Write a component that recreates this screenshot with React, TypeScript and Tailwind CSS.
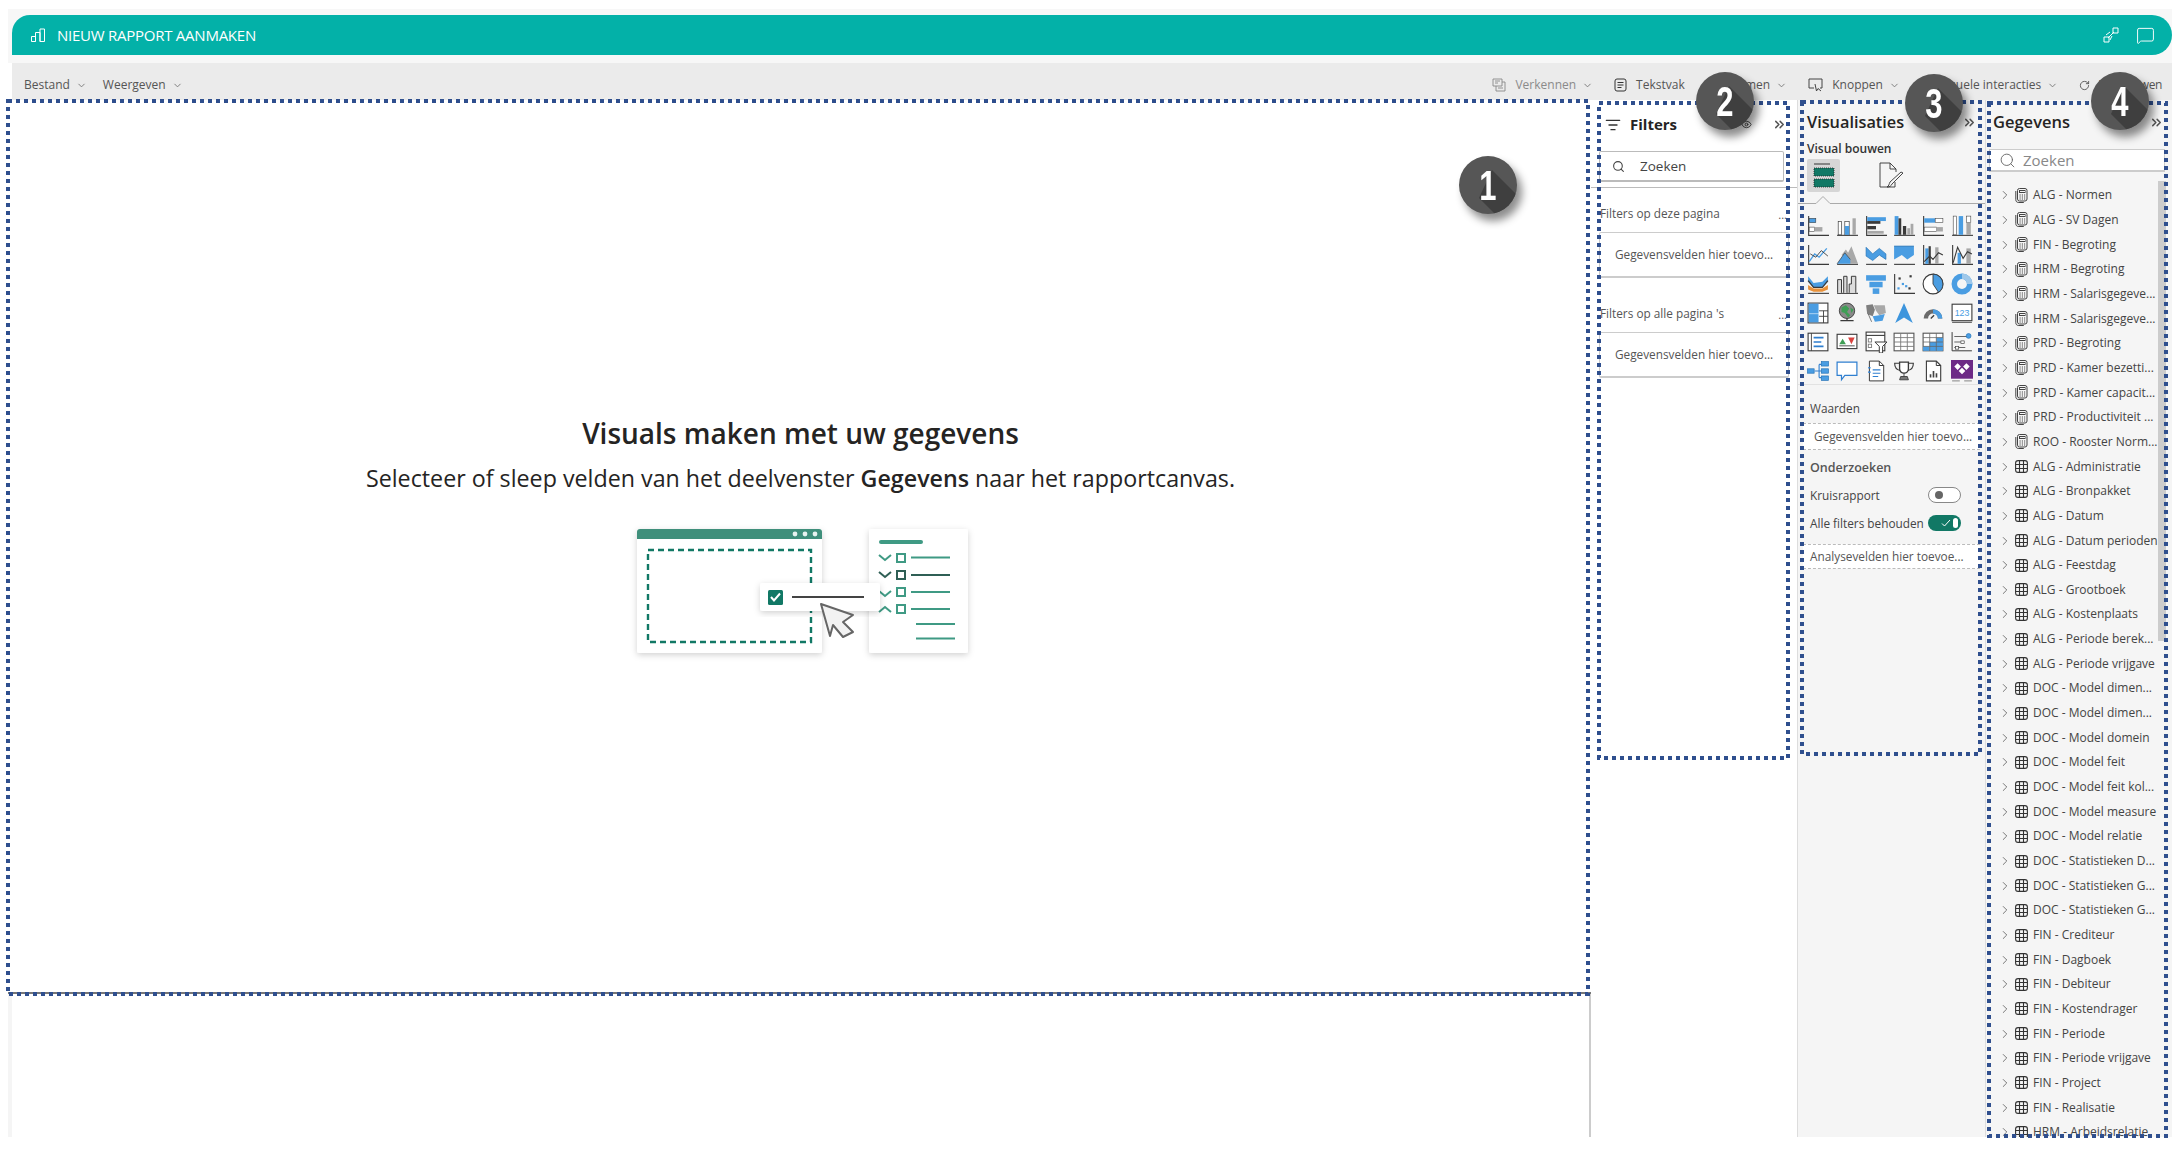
import { ReactNode } from "react";
import { ChevronDown, ChevronRight, ChevronsRight, Eye, ListFilter, MessageSquare, RotateCw, Search } from "lucide-react";

const B = "#4a9de2";
const G = "#a8a8a8";
const D = "#3a3a3a";
const axis = <path d="M1.5 1v17.5H20" fill="none" stroke={D} strokeWidth="1" />;
const base = <path d="M1 18.5h19" fill="none" stroke={D} strokeWidth="1" />;

// Visualisaties gallery, row by row
const vizIcons: ReactNode[] = [
  <>{axis}<rect x="2" y="3" width="6" height="4" fill={B} stroke={D} strokeWidth=".5" /><rect x="2" y="11" width="5" height="4" fill="#fff" stroke={D} strokeWidth=".5" /><rect x="7" y="11" width="7" height="4" fill={G} /></>,
  <>{base}<rect x="2" y="6" width="3" height="12" fill="#fff" stroke={D} strokeWidth=".6" /><rect x="8" y="6" width="4" height="12" fill="#fff" stroke={D} strokeWidth=".6" /><rect x="8" y="10" width="4" height="8" fill={B} /><rect x="15" y="3" width="3" height="15" fill={G} /></>,
  <>{axis}<rect x="2" y="2" width="17" height="3.5" fill={B} /><rect x="2" y="5.5" width="12" height="2.5" fill={D} /><rect x="2" y="10" width="8" height="3" fill={D} /><rect x="2" y="14.5" width="15" height="2.5" fill={G} /></>,
  <>{base}<rect x="1.5" y="1" width="3.5" height="17" fill={B} /><rect x="5" y="3" width="2.5" height="15" fill={D} /><rect x="9" y="10" width="3" height="8" fill={D} /><rect x="13" y="12" width="2.5" height="6" fill={G} /><rect x="16" y="8" width="2.5" height="10" fill={G} /></>,
  <>{axis}<rect x="2" y="3" width="10" height="4" fill={B} /><rect x="12" y="3" width="7" height="4" fill="#fff" stroke={D} strokeWidth=".5" /><rect x="2" y="11" width="11" height="4" fill="#fff" stroke={D} strokeWidth=".5" /><rect x="13" y="11" width="6" height="4" fill={G} /></>,
  <>{base}<rect x="2" y="1" width="3" height="17" fill="#fff" stroke={D} strokeWidth=".5" /><rect x="7" y="1" width="4" height="17" fill={B} /><rect x="14" y="1" width="4" height="6" fill="#fff" stroke={D} strokeWidth=".5" /><rect x="14" y="7" width="4" height="11" fill={G} /></>,

  <>{axis}<path d="M2 16l5-7 4 3 7-8" fill="none" stroke={B} strokeWidth="1.2" /><path d="M3 9l5 3 5-6 6 5" fill="none" stroke={D} strokeWidth=".8" /></>,
  <>{base}<path d="M5 10l4-5 2 3 3-6 6 16h-7l-5-6z" fill={G} /><path d="M1 18l7-10 5 6v4z" fill={B} /><path d="M1 18l7-10 5 6" fill="none" stroke={D} strokeWidth=".6" /></>,
  <>{base}<path d="M1 3l6 6 6-5 6 5v5l-6-4-6 5-6-4z" fill={B} stroke="#1f6fb5" strokeWidth=".6" /></>,
  <>{base}<path d="M1 2h18v8l-6 4-5-4-7 4z" fill={B} /><path d="M1 2h18" stroke="#1f6fb5" strokeWidth=".8" /></>,
  <>{axis}<rect x="3" y="4" width="3" height="14" fill={B} /><rect x="6" y="2" width="2" height="16" fill={D} /><rect x="12" y="3" width="3" height="15" fill={G} /><path d="M2 16l5-5 3 3 5-6 4 2" fill="none" stroke={D} strokeWidth="1" /></>,
  <>{axis}<rect x="6" y="8" width="3" height="10" fill={B} /><rect x="14" y="4" width="4" height="14" fill={G} /><path d="M2 17l4-14 5 10 4-6 4 2" fill="none" stroke={D} strokeWidth="1" /></>,

  <>{base}<path d="M1 3l5 6 8-1 5-5v5l-5 5H6l-5-5z" fill={B} /><path d="M1 11l5 3h8l5-3v4l-5 2H6l-5-2z" fill="#e8913a" /><path d="M1 7l5 6h8l5-6" fill="none" stroke={D} strokeWidth="1.2" /></>,
  <>{base}<path d="M1.5 18V6h3.5v12M7 18V3h3v15M12 18v-8h2V3h4v15" fill="#dcdcdc" stroke={D} strokeWidth=".9" /></>,
  <><rect x="1" y="2" width="18" height="5" fill={B} /><rect x="4" y="8" width="12" height="5" fill={B} /><rect x="7" y="14" width="6" height="5" fill={B} /></>,
  <>{axis}<g fill={D}><rect x="5" y="4" width="2" height="2" /><rect x="15" y="2" width="2" height="2" /><rect x="14" y="13" width="2" height="2" /></g><g fill={B}><rect x="8" y="9" width="2" height="2" /><rect x="11" y="11" width="2" height="2" /><rect x="4" y="13" width="2" height="2" /></g></>,
  <><circle cx="10" cy="10" r="9" fill="#fff" stroke={D} strokeWidth="1" /><path d="M10 1a9 9 0 0 1 9 9 9 9 0 0 1-4 7.5L10 10z" fill={B} stroke={D} strokeWidth=".8" /></>,
  <><circle cx="10" cy="10" r="7" fill="none" stroke={B} strokeWidth="5" /><path d="M10 3a7 7 0 0 1 7 7" fill="none" stroke="#9fc8ea" strokeWidth="5" /></>,

  <><rect x="1" y="1" width="18" height="18" fill="#fff" stroke={D} strokeWidth="1" /><rect x="1.5" y="1.5" width="9" height="9" fill={B} /><rect x="1.5" y="11" width="9" height="7.5" fill={B} /><path d="M11 8h8M15 8v11M11 13h8" stroke={D} strokeWidth=".8" /></>,
  <><circle cx="10" cy="8" r="7" fill="#8a8a8a" stroke={D} strokeWidth=".8" /><path d="M5 5l4-2 3 3-2 3 3 3-2 2-3-4-3-1z" fill="#3f9e55" /><path d="M13 5l3 2-2 3z" fill="#3f9e55" /><path d="M4 17h12M10 15v2" stroke={D} strokeWidth="1.2" /></>,
  <><path d="M1 3l6-1 2 5-2 6-5-2z" fill="#7e7e7e" /><path d="M8 3l10 0 1 7-6 2-3-4z" fill={G} /><path d="M7 13l6-1 5-1-2 6-7 1z" fill={B} /><path d="M3 11l3 7" stroke={D} strokeWidth=".6" /></>,
  <path d="M10 1l8 18-8-5-8 5z" fill="#3d95dd" />,
  <><path d="M1.5 15a8.5 8.5 0 0 1 17 0h-4a4.5 4.5 0 0 0-9 0z" fill="#6b6b6b" /><path d="M10 6.5a8.5 8.5 0 0 1 8.5 8.5h-4a4.5 4.5 0 0 0-4.5-4.5z" fill={B} /><path d="M8 15l3-3" stroke={D} strokeWidth="1.2" /></>,
  <><rect x="1" y="2" width="18" height="15" fill="#fff" stroke={D} strokeWidth="1" /><text x="10" y="12.5" textAnchor="middle" fontSize="8" fill={B} fontFamily="Liberation Sans, sans-serif">123</text><path d="M1 18.5h18" stroke={D} strokeWidth=".8" /></>,

  <><rect x="1" y="2" width="18" height="16" fill="#fff" stroke={D} strokeWidth="1" /><path d="M4 2v16" stroke={D} strokeWidth=".8" /><path d="M6 6h9M6 10h7M6 14h9" stroke="#2f7fd0" strokeWidth="1.5" /></>,
  <><rect x="1" y="3" width="18" height="13" fill="#fff" stroke={D} strokeWidth="1" /><path d="M6 7l3 5H3z" fill="#3f9e55" /><path d="M11 6h6l-3 6z" fill="#d9433f" /><path d="M3 13.5h14" stroke={D} strokeWidth=".8" /></>,
  <><rect x="1" y="1" width="17" height="17" fill="#fff" stroke={D} strokeWidth="1" /><path d="M1 4h17" stroke={D} strokeWidth="1" /><g fill="none" stroke="#777" strokeWidth=".8"><rect x="3" y="7" width="3" height="3" /><rect x="3" y="12" width="3" height="3" /></g><path d="M9 10h11l-4 4v6h-3v-6z" fill="#fff" stroke={D} strokeWidth=".9" /></>,
  <><rect x="1" y="2" width="18" height="16" fill="#fff" stroke="#555" strokeWidth="1" /><path d="M1 6h18M1 10h18M1 14h18M7 2v16M13 2v16" stroke="#777" strokeWidth=".8" /></>,
  <><rect x="1" y="2" width="18" height="16" fill="#fff" stroke="#555" strokeWidth="1" /><rect x="7" y="10" width="12" height="8" fill={B} /><rect x="13" y="6" width="6" height="4" fill={B} /><rect x="1" y="14" width="6" height="4" fill={B} /><path d="M1 6h18M1 10h18M1 14h18M7 2v16M13 2v16" stroke="#666" strokeWidth=".7" /></>,
  <><path d="M1 1v17h18" fill="none" stroke={D} strokeWidth=".9" /><path d="M3 5h12M3 10h6M3 15h10" stroke={D} strokeWidth=".7" /><circle cx="16" cy="4.5" r="2.2" fill={B} stroke="#1f6fb5" strokeWidth=".6" /><rect x="9" y="9" width="3" height="2.5" fill="#fff" stroke={D} strokeWidth=".6" /><rect x="4" y="14" width="3" height="2.5" fill="#fff" stroke={D} strokeWidth=".6" /></>,

  <><path d="M7 10h4M11 4v12M11 4h2M11 10h2M11 16h2" fill="none" stroke="#2f7fd0" strokeWidth="1" /><rect x="0.5" y="8" width="6" height="4" fill={B} stroke="#1f6fb5" strokeWidth=".6" /><g fill={B} stroke="#1f6fb5" strokeWidth=".6"><rect x="13" y="1.5" width="6.5" height="4" /><rect x="13" y="8" width="6.5" height="4" /><rect x="13" y="14.5" width="6.5" height="4" /></g></>,
  <path d="M1 2h18v12H8l-3 4v-4H1z" fill="#fff" stroke="#2f7fd0" strokeWidth="1.1" />,
  <><path d="M4 1h9l4 4v14H4z" fill="#fff" stroke={D} strokeWidth=".9" /><path d="M13 1v4h4" fill="none" stroke={D} strokeWidth=".9" /><path d="M3 7h2M3 11h2" stroke="#2f7fd0" strokeWidth="1.5" /><path d="M7 9h7M7 12h7M7 15h5" stroke="#2f7fd0" strokeWidth="1" /></>,
  <><path d="M6 2h8v6a4 4 0 0 1-8 0z" fill="#fff" stroke={D} strokeWidth="1.2" /><path d="M6 3H1.5c0 4 2 6 5 6.5M14 3h4.500c0 4-2 6-5 6.500" fill="none" stroke={D} strokeWidth="1" /><path d="M10 12v3M6 18h8l-1-3H7z" fill="#777" stroke={D} strokeWidth=".8" /></>,
  <><path d="M4 1h9l4 4v14H4z" fill="#fff" stroke={D} strokeWidth="1" /><path d="M13 1v4h4" fill="none" stroke={D} strokeWidth=".9" /><path d="M7 16v-3h1.5v3zM9.700 16v-6h1.5v6zM12.400 16v-4h1.5v4z" fill="#444" /></>,
  <><rect x="0" y="0" width="20" height="17" fill="#6d2a86" /><path d="M6 3l3 3-3 3-3-3zM14 3l3 3-3 3-3-3zM10 7l3 3-3 3-3-3z" fill="#fff" /><path d="M1 19h7M12 19h7" stroke="#777" strokeWidth=".8" /></>,
];

const calcRows = ["ALG - Normen", "ALG - SV Dagen", "FIN - Begroting", "HRM - Begroting", "HRM - Salarisgegeve...", "HRM - Salarisgegeve...", "PRD - Begroting", "PRD - Kamer bezetti...", "PRD - Kamer capacit...", "PRD - Productiviteit ...", "ROO - Rooster Norm..."];
const tableRows = ["ALG - Administratie", "ALG - Bronpakket", "ALG - Datum", "ALG - Datum perioden", "ALG - Feestdag", "ALG - Grootboek", "ALG - Kostenplaats", "ALG - Periode berek...", "ALG - Periode vrijgave", "DOC - Model dimen...", "DOC - Model dimen...", "DOC - Model domein", "DOC - Model feit", "DOC - Model feit kol...", "DOC - Model measure", "DOC - Model relatie", "DOC - Statistieken D...", "DOC - Statistieken G...", "DOC - Statistieken G...", "FIN - Crediteur", "FIN - Dagboek", "FIN - Debiteur", "FIN - Kostendrager", "FIN - Periode", "FIN - Periode vrijgave", "FIN - Project", "FIN - Realisatie", "HRM - Arbeidsrelatie"];

function CalcIcon() {
  return (
    <svg width="13" height="15" viewBox="0 0 13 15" fill="none" stroke="#444" strokeWidth="1">
      <rect x="2.5" y=".5" width="9.5" height="12.5" rx="2" />
      <path d="M.8 3v8.500c0 2 1 3 3 3h5" />
      <rect x="4.5" y="2.5" width="5.5" height="2" />
      <path d="M4.500 7h1.200M6.800 7H8M9 7h1.200M4.500 9h1.200M6.800 9H8M9 9h1.200M4.500 11h1.200M6.800 11H8M9 11h1.200" />
    </svg>
  );
}

function TableIcon() {
  return (
    <svg width="13" height="13" viewBox="0 0 13 13" fill="none" stroke="#333" strokeWidth="1.1">
      <rect x=".6" y=".6" width="11.8" height="11.8" rx="2.5" />
      <path d="M.6 4.500h11.800M.6 8.500h11.800M4.500.6v11.800M8.500.6v11.800" />
    </svg>
  );
}

function FieldRow({ label, icon }: { label: string; icon: ReactNode }) {
  return (
    <div className="flex h-[24.67px] items-center">
      <ChevronRight size={14} className="w-[14px] text-[#444]" strokeWidth={1.2} />
      <div className="ml-[1px] flex w-[16px] justify-center">{icon}</div>
      <span className="ml-[4px] whitespace-nowrap text-[12px] text-[#444]">{label}</span>
    </div>
  );
}

function ToolItem({ icon, label, chevron = true, muted = false, className = "" }: { icon?: ReactNode; label: string; chevron?: boolean; muted?: boolean; className?: string }) {
  return (
    <div className={`flex items-center whitespace-nowrap text-[12px] ${muted ? "text-[#8a8a8a]" : "text-[#555]"} ${className}`}>
      {icon}
      <span className="ml-[9px]">{label}</span>
      {chevron && <ChevronDown size={11} className="ml-[6px] text-[#777]" />}
    </div>
  );
}

function Toggle({ on }: { on?: boolean }) {
  if (on) {
    return (
      <div className="flex h-[16px] w-[33px] items-center justify-end rounded-full bg-[#117865] pr-[3px]">
        <svg width="10" height="8" viewBox="0 0 10 8" fill="none" stroke="#fff" strokeWidth="1"><path d="M1 4.500L3.500 7 9 1" /></svg>
        <div className="ml-[2px] h-[10px] w-[5px] rounded-full bg-white" />
      </div>
    );
  }
  return (
    <div className="flex h-[16px] w-[33px] items-center rounded-full border border-[#888] bg-white pl-[6px]">
      <div className="h-[8px] w-[8px] rounded-full bg-[#666]" />
    </div>
  );
}

function NumberBadge({ n, className }: { n: number; className: string }) {
  return (
    <div className={`absolute flex h-[58px] w-[58px] items-center justify-center overflow-hidden rounded-full bg-[#565656] shadow-[5px_7px_9px_rgba(0,0,0,0.45)] ${className}`}>
      <svg className="absolute inset-0" width="58" height="58" viewBox="0 0 58 58">
        <path d="M33 14L58 39V58H36L20 42z" fill="#3f3f3f" />
      </svg>
      <span className="relative scale-x-[0.72] font-['Liberation_Sans',sans-serif] text-[43px] leading-none font-bold text-white">{n}</span>
    </div>
  );
}

function Illustration() {
  return (
    <svg width="360" height="160" viewBox="0 0 360 160" fill="none">
      <defs>
        <filter id="soft" x="-20%" y="-20%" width="140%" height="140%">
          <feDropShadow dx="0" dy="2" stdDeviation="3" floodColor="#000" floodOpacity=".18" />
        </filter>
      </defs>
      <rect x="16" y="19" width="185" height="124" rx="2" fill="#fff" filter="url(#soft)" />
      <path d="M16 29v-7a3 3 0 0 1 3-3h179a3 3 0 0 1 3 3v7z" fill="#3f8f7b" />
      <circle cx="174" cy="24" r="2.4" fill="#e8f2ef" />
      <circle cx="184" cy="24" r="2.4" fill="#e8f2ef" />
      <circle cx="194" cy="24" r="2.4" fill="#e8f2ef" />
      <rect x="27" y="40" width="163" height="92" stroke="#117865" strokeWidth="2.4" strokeDasharray="6 4" />
      <rect x="248" y="19" width="99" height="124" rx="2" fill="#fff" filter="url(#soft)" />
      <rect x="258" y="30" width="44" height="4" rx="2" fill="#3f9a84" />
      <g stroke="#3f9a84" strokeWidth="2">
        <path d="M258 45l6 5 6-5" />
        <rect x="276" y="44" width="8" height="8" />
        <path d="M290 47.500h39" />
        <path d="M258 81l6 5 6-5" />
        <rect x="276" y="78" width="8" height="8" />
        <path d="M290 82h39" />
        <path d="M258 102l6-5 6 5" />
        <rect x="276" y="95" width="8" height="8" />
        <path d="M290 99h39M295 114h39M295 128.500h39" />
      </g>
      <g stroke="#2f5f55" strokeWidth="2">
        <path d="M258 62l6 5 6-5" />
        <rect x="276" y="61" width="8" height="8" />
        <path d="M290 65h39" />
      </g>
      <rect x="139" y="73" width="120" height="28" rx="3" fill="#fff" filter="url(#soft)" />
      <rect x="147" y="80" width="15" height="15" rx="1.500" fill="#117865" />
      <path d="M150 87l3 3.500 6-7" stroke="#fff" strokeWidth="2" />
      <path d="M171 87h72" stroke="#444" strokeWidth="2" />
      <path d="M200 94l32 11-10 7 10 10-10 5-10-12-3 11z" fill="#f2f2f2" stroke="#666" strokeWidth="2" strokeLinejoin="round" />
    </svg>
  );
}

export default function App() {
  return (
    <div className="relative h-[1150px] w-[2179px] overflow-hidden bg-white font-['Open_Sans','Liberation_Sans',sans-serif]">
      <div className="ml-[8px] mr-[7px] mt-[9px] flex h-[1128px] flex-col">
        <div className="bg-[#f7f7f7] pl-[4px] pt-[6px] pb-[8px]">
          <div className="flex h-[40px] items-center rounded-tl-[18px] rounded-r-[20px] bg-[#03b1a8] pl-[18px] pr-[17px] text-white">
            <svg width="16" height="16" viewBox="0 0 16 16" fill="none" stroke="#fff" strokeWidth="1"><path d="M1.500 14.500v-5h4v5zM5.500 14.500v-9h4.500v9M10 14.500V2h4.500v12.500z" /></svg>
            <span className="ml-[11px] text-[15px] font-medium tracking-[-0.25px]">NIEUW RAPPORT AANMAKEN</span>
            <div className="ml-auto flex items-center gap-[16px]">
              <svg width="18" height="18" viewBox="0 0 18 18" fill="none" stroke="#fff" strokeWidth="1"><path d="M2 11h5v5H2zM11 2h5v5h-5zM6 12l6-6M8 14l2-4M4 9l4-3" /></svg>
              <MessageSquare size={19} strokeWidth={1.2} />
            </div>
          </div>
        </div>
        <div className="ml-[4px] flex h-[37px] shrink-0 items-center bg-[#ebebeb] pl-[12px] pr-[10px] pt-[7px] text-[12px] text-[#555]">
          <span>Bestand</span>
          <ChevronDown size={11} className="ml-[6px] text-[#777]" />
          <span className="ml-[16px]">Weergeven</span>
          <ChevronDown size={11} className="ml-[6px] text-[#777]" />
          <div className="ml-auto flex items-center gap-[21px]">
            <ToolItem muted label="Verkennen" icon={<svg width="14" height="14" viewBox="0 0 14 14" fill="none" stroke="#888" strokeWidth=".9"><path d="M1 1h9v7H1zM4 8v5h9V4h-3M3 3h5M3 5h3M6 10h5" /></svg>} />
            <ToolItem label="Tekstvak" chevron={false} icon={<svg width="13" height="14" viewBox="0 0 13 14" fill="none" stroke="#333" strokeWidth="1"><rect x="1" y="1" width="11" height="12" rx="2" /><path d="M3.500 4.500h6M3.500 7h6M3.500 9.500h4" /></svg>} />
            <ToolItem label="Vormen" icon={<div className="h-[14px] w-[11px]" />} />
            <ToolItem label="Knoppen" icon={<svg width="15" height="14" viewBox="0 0 15 14" fill="none" stroke="#444" strokeWidth="1"><path d="M6 10H1V1h13v9h-2M7 6l1.500 7 1.500-2.500 3 2.500" /></svg>} />
            <ToolItem label="Visuele interacties" icon={<div className="h-[14px] w-[10px]" />} />
            <ToolItem label="Vernieuwen" chevron={false} className="tracking-[-0.4px]" icon={<RotateCw size={11} className="text-[#555]" />} />
          </div>
        </div>

        <div className="flex h-[1037px] overflow-hidden">
          <div className="flex w-[1583px] shrink-0 flex-col">
            <div className="flex h-[894px] flex-col items-center border-b-2 border-[#777] bg-white pt-[313px] pl-[2px]">
              <h1 className="text-[28px] leading-[40px] font-semibold text-[#252423]">Visuals maken met uw gegevens</h1>
              <p className="mt-[7px] text-[23.25px] leading-[36px] text-[#252423]">
                Selecteer of sleep velden van het deelvenster <b className="font-semibold">Gegevens</b> naar het rapportcanvas.
              </p>
              <div className="mt-[14px]"><Illustration /></div>
            </div>
            <div className="flex-1 border-l-4 border-r-2 border-l-[#f5f5f5] border-r-[#ccc] bg-white" />
          </div>

          {/* Filters */}
          <div className="w-[206px] shrink-0 bg-white">
            <div className="flex h-[51px] items-center pb-[2px] pl-[14px] pr-[10px]">
              <ListFilter size={16} className="text-[#333]" />
              <span className="ml-[9px] text-[15px] font-bold text-[#252423]">Filters</span>
              <Eye size={11} className="ml-auto text-[#444]" />
              <ChevronsRight size={15} strokeWidth={2.4} className="ml-[20px] text-[#555]" />
            </div>
            <div className="mx-[8px] flex h-[31px] w-[185px] items-center rounded-[2px] border border-b-2 border-[#bbb] bg-white pl-[12px] text-[13.5px] text-[#444]">
              <Search size={13} className="text-[#444]" />
              <span className="ml-[15px]">Zoeken</span>
            </div>
            <div className="mt-[5px] h-px bg-[#bbb]" />
            <div className="mx-[8px] mt-[17px] flex h-[18px] items-center justify-between pr-[2px] pl-[1px] text-[11.8px] text-[#555]">
              <span>Filters op deze pagina</span><span className="text-[11px] leading-none">...</span>
            </div>
            <div className="mx-[8px] mt-[9px] flex h-[46px] items-center rounded-[2px] border border-b-2 border-[#ccc] pl-[15px] text-[11.8px] whitespace-nowrap text-[#555]">Gegevensvelden hier toevo...</div>
            <div className="mx-[8px] mt-[27px] flex h-[18px] items-center justify-between pr-[2px] pl-[1px] text-[11.8px] text-[#555]">
              <span>Filters op alle pagina 's</span><span className="text-[11px] leading-none">...</span>
            </div>
            <div className="mx-[8px] mt-[9px] flex h-[46px] items-center rounded-[2px] border border-b-2 border-[#ccc] pl-[15px] text-[11.8px] whitespace-nowrap text-[#555]">Gegevensvelden hier toevo...</div>
          </div>

          {/* Visualisaties */}
          <div className="w-[188px] shrink-0 border-l border-[#ddd] bg-[#f5f5f5]">
            <div className="flex h-[37px] items-center pl-[9px] pr-[8px] pt-[8px]">
              <span className="text-[16.3px] font-semibold text-[#252423]">Visualisaties</span>
              <ChevronsRight size={15} strokeWidth={2.4} className="ml-auto text-[#555]" />
            </div>
            <div className="mt-[3px] h-[18px] pl-[9px] text-[12px] leading-[18px] font-semibold text-[#333]">Visual bouwen</div>
            <div className="mt-[1px] flex items-center pl-[9px]">
              <div className="flex h-[33px] w-[33px] flex-col items-center justify-center rounded-[2px] bg-[#d6d6d6]">
                <svg width="27" height="27" viewBox="0 0 27 27">
                  <path d="M4 2h16" stroke="#333" strokeWidth="1" />
                  <rect x="4" y="6" width="20" height="8" fill="#117865" stroke="#222" strokeWidth=".8" strokeDasharray="1 1" />
                  <rect x="4" y="17" width="20" height="8" fill="#117865" stroke="#222" strokeWidth=".8" strokeDasharray="1 1" />
                </svg>
              </div>
              <svg className="ml-[38px]" width="27" height="28" viewBox="0 0 27 28" fill="none" stroke="#333" strokeWidth=".9">
                <path d="M17 20v5H2V1h10l6 6v3M12 1v6h6" />
                <path d="M25 11L14 22c-1 2-2 3-5 3 2-1 2-3 3-5L23 10z" />
              </svg>
            </div>
            <svg className="mt-[3px] block" width="188" height="9" viewBox="0 0 188 9" fill="none" stroke="#aaa" strokeWidth="1">
              <path d="M0 8.500h18l7-7 7 7h156" />
            </svg>
            <div className="mt-[8px] grid grid-cols-[repeat(6,28.7px)] auto-rows-[28.9px] pl-[6px]">
              {vizIcons.map((icon, i) => (
                <div key={i} className="flex items-center justify-center">
                  <svg width="22" height="22" viewBox="0 0 20 20">{icon}</svg>
                </div>
              ))}
            </div>
            <div className="-mt-[1px] h-px bg-[#e2e2e2]" />
            <div className="mt-[14px] pl-[12px] text-[11.8px] leading-[18px] text-[#444]">Waarden</div>
            <div className="mx-[5px] mt-[6px] flex h-[27px] items-center border-y border-dashed border-[#bbb] bg-white pl-[11px] text-[11.8px] whitespace-nowrap text-[#555]">Gegevensvelden hier toevo...</div>
            <div className="mt-[9px] pl-[12px] text-[12.5px] leading-[18px] font-semibold text-[#555]">Onderzoeken</div>
            <div className="mt-[9px] flex h-[18px] items-center justify-between pr-[24px] pl-[12px] text-[11.8px] text-[#444]">
              <span>Kruisrapport</span><Toggle />
            </div>
            <div className="mt-[10px] flex h-[18px] items-center justify-between pr-[24px] pl-[12px] text-[11.8px] whitespace-nowrap text-[#444]">
              <span>Alle filters behouden</span><Toggle on />
            </div>
            <div className="mx-[5px] mt-[12px] flex h-[25px] items-center border-y border-dashed border-[#bbb] bg-white pl-[7px] text-[11.8px] whitespace-nowrap text-[#555]">Analysevelden hier toevoe...</div>
          </div>

          {/* Gegevens */}
          <div className="relative w-[187px] shrink-0 overflow-hidden border-l border-[#ddd] bg-[#f5f5f5]">
            <div className="flex h-[37px] items-center pl-[7px] pr-[8px] pt-[8px]">
              <span className="text-[16.5px] font-semibold text-[#252423]">Gegevens</span>
              <ChevronsRight size={15} strokeWidth={2.4} className="ml-auto text-[#555]" />
            </div>
            <div className="ml-[3px] mt-[12px] mr-[7px] flex h-[23px] items-center border border-b-2 border-[#ccc] bg-white pl-[9px] text-[15px] text-[#888]">
              <Search size={17} strokeWidth={1.3} className="text-[#666]" />
              <span className="ml-[7px]">Zoeken</span>
            </div>
            <div className="mt-[11px] pl-[12px]">
              {calcRows.map((r, i) => <FieldRow key={i} label={r} icon={<CalcIcon />} />)}
              {tableRows.map((r, i) => <FieldRow key={i} label={r} icon={<TableIcon />} />)}
            </div>
            <div className="absolute left-[172px] top-[81px] h-[460px] w-[8px] bg-[#cccccc]" />
          </div>
        </div>
      </div>

      {/* annotation frames and numbers over the screenshot */}
      <svg className="pointer-events-none absolute inset-0" width="2179" height="1150" fill="none" stroke="#2f4f8e" strokeWidth="4" strokeDasharray="4 4">
        <rect x="8" y="101" width="1580" height="893" />
        <rect x="1599" y="103" width="189" height="655" />
        <rect x="1802" y="102" width="178" height="652" />
        <rect x="1989" y="103" width="177" height="1033" />
      </svg>
      <NumberBadge n={1} className="left-[1459px] top-[156px]" />
      <NumberBadge n={2} className="left-[1696px] top-[72px]" />
      <NumberBadge n={3} className="left-[1905px] top-[74px]" />
      <NumberBadge n={4} className="left-[2091px] top-[72px]" />
    </div>
  );
}
